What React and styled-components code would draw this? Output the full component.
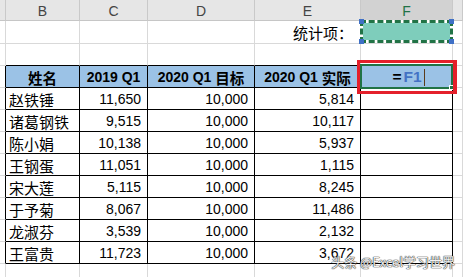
import React from "react";
import styled, { createGlobalStyle } from "styled-components";

const Global = createGlobalStyle`
  html, body { margin: 0; padding: 0; background: #fff; overflow: hidden; }
  * { box-sizing: border-box; }
`;

const GRID = "#d9d9d9";
const INK = "#000";

const Sheet = styled.div`
  position: relative;
  display: grid;
  grid-template-columns: 6px 74px 68px 107px 106px 92px 1fr;
  grid-template-rows: 21px 23px 22px repeat(9, 22px) 22px;
  width: 463px;
  height: 277px;
  overflow: hidden;
  background: #fff;
`;

const ColHead = styled.div`
  display: flex;
  align-items: center;
  justify-content: center;
  background: ${(p) => (p.$active ? "#d2d2d2" : "#e6e6e6")};
  border-right: 1px solid #c9c9c9;
  border-bottom: 1px solid ${(p) => (p.$active ? "#217346" : "#c6c6c6")};
  color: ${(p) => (p.$active ? "#217346" : "#444")};
  font-family: "Liberation Sans", Arial, sans-serif;
  font-size: 14px;
  padding-top: 1px;
`;

const Cell = styled.div`
  position: relative;
  display: flex;
  align-items: center;
  justify-content: ${(p) =>
    p.$align === "right" ? "flex-end" : p.$align === "center" ? "center" : "flex-start"};
  padding: ${(p) => (p.$align === "right" ? "1px 6px 0 0" : p.$align === "center" ? "1px 0 0" : "1px 0 0 3px")};
  background: ${(p) => p.$bg || "#fff"};
  border-right: 1px solid ${(p) => p.$r || GRID};
  border-bottom: 1px solid ${(p) => p.$b || GRID};
  color: #000;
  font-family: "Liberation Sans", Arial, "Noto Sans CJK SC", sans-serif;
  font-size: ${(p) => p.$size || 14}px;
  font-weight: ${(p) => (p.$bold ? 700 : 400)};
  white-space: nowrap;
`;

const Name = styled.span`
  font-family: "Noto Sans CJK SC", sans-serif;
  font-size: 15px;
`;

const CjkBold = styled.span`
  font-family: "Noto Sans CJK SC", sans-serif;
  font-size: 14.5px;
  font-weight: 700;
`;

const Label = styled.span`
  font-family: "Noto Sans CJK SC", sans-serif;
  font-size: 15px;
  margin-right: 1px;
`;

const Marquee = styled.div`
  position: absolute;
  z-index: 3;
  left: -1px;
  top: -1px;
  width: 93px;
  height: 23px;
  border: 3px dashed #217346;
  background: linear-gradient(#7ecdbb, #7ecdbb) padding-box,
    linear-gradient(#fff, #fff) border-box;
`;

const Handle = styled.span`
  position: absolute;
  width: 5px;
  height: 5px;
  background: #3f70c6;
  ${(p) => (p.$top ? "top: -4px;" : "bottom: -4px;")}
  ${(p) => (p.$left ? "left: -4px;" : "right: -4px;")}
`;

const Selection = styled.div`
  position: absolute;
  z-index: 3;
  left: -1px;
  top: -2px;
  width: 93px;
  height: 25px;
  border: 2px solid #217346;
  pointer-events: none;
`;

const FillHandle = styled.span`
  position: absolute;
  right: -3px;
  bottom: -3px;
  width: 5px;
  height: 5px;
  background: #217346;
  border: 1px solid #fff;
`;

const RedBox = styled.div`
  position: absolute;
  z-index: 4;
  left: -4px;
  top: -6px;
  width: 100px;
  height: 34px;
  border: 3px solid #e4202b;
  border-right-width: 4px;
  pointer-events: none;
`;

const Formula = styled.span`
  position: relative;
  display: inline-flex;
  align-items: center;
  font-family: "Liberation Sans", Arial, sans-serif;
  font-size: 15.5px;
  font-weight: 700;
  color: #000;
  margin-left: 4px;
`;

const Ref = styled.span`
  color: #4472c4;
  margin-left: 2px;
`;

const Caret = styled.span`
  display: inline-block;
  width: 1px;
  height: 17px;
  background: #5b3b1c;
  margin-left: 2px;
`;

const Watermark = styled.div`
  position: absolute;
  z-index: 5;
  right: 8px;
  bottom: 8px;
  font-family: "Noto Sans CJK SC", sans-serif;
  font-size: 13px;
  line-height: 14px;
  color: rgba(255, 255, 255, 0.95);
  text-shadow: 0 0 1px #333, 0 0 1px #333, 0 0 1px #555;
  white-space: nowrap;
  pointer-events: none;
`;

const rows = [
  ["赵铁锤", "11,650", "10,000", "5,814"],
  ["诸葛钢铁", "9,515", "10,000", "10,117"],
  ["陈小娟", "10,138", "10,000", "5,937"],
  ["王钢蛋", "11,051", "10,000", "1,115"],
  ["宋大莲", "5,115", "10,000", "8,245"],
  ["于予菊", "8,067", "10,000", "11,486"],
  ["龙淑芬", "3,539", "10,000", "2,132"],
  ["王富贵", "11,723", "10,000", "3,672"],
];

const letters = ["", "B", "C", "D", "E", "F", ""];

export default function App() {
  return (
    <>
      <Global />
      <Sheet>
        {letters.map((l, i) => (
          <ColHead key={"h" + i} $active={l === "F"}>
            {l}
          </ColHead>
        ))}

        {/* row 1 */}
        <Cell />
        <Cell />
        <Cell />
        <Cell />
        <Cell $align="right">
          <Label>统计项：</Label>
        </Cell>
        <Cell>
          <Marquee>
            <Handle $top $left />
            <Handle $top />
            <Handle $left />
            <Handle />
          </Marquee>
        </Cell>
        <Cell />

        {/* row 2 */}
        <Cell />
        <Cell $b={INK} />
        <Cell $b={INK} />
        <Cell $b={INK} />
        <Cell $b={INK} />
        <Cell $b={INK} />
        <Cell />

        {/* header row */}
        <Cell $r={INK} />
        <Cell $r={INK} $b={INK} $bg="#9bc2e6" $align="center" $bold>
          <CjkBold>姓名</CjkBold>
        </Cell>
        <Cell $r={INK} $b={INK} $bg="#9bc2e6" $align="center" $bold>
          2019 Q1
        </Cell>
        <Cell $r={INK} $b={INK} $bg="#9bc2e6" $align="center" $bold>
          2020 Q1&nbsp;<CjkBold>目标</CjkBold>
        </Cell>
        <Cell $r={INK} $b={INK} $bg="#9bc2e6" $align="center" $bold>
          2020 Q1&nbsp;<CjkBold>实际</CjkBold>
        </Cell>
        <Cell $r={INK} $b={INK} $bg="#9bc2e6" $align="center" $bold>
          <Formula>
            =<Ref>F1</Ref>
            <Caret />
          </Formula>
          <Selection>
            <FillHandle />
          </Selection>
          <RedBox />
        </Cell>
        <Cell />

        {rows.map((r, i) => (
          <React.Fragment key={i}>
            <Cell $r={INK} />
            <Cell $r={INK} $b={INK}>
              <Name>{r[0]}</Name>
            </Cell>
            <Cell $r={INK} $b={INK} $align="right">
              {r[1]}
            </Cell>
            <Cell $r={INK} $b={INK} $align="right">
              {r[2]}
            </Cell>
            <Cell $r={INK} $b={INK} $align="right">
              {r[3]}
            </Cell>
            <Cell $r={INK} $b={INK} />
            <Cell />
          </React.Fragment>
        ))}

        {/* trailing row */}
        <Cell />
        <Cell />
        <Cell />
        <Cell />
        <Cell />
        <Cell />
        <Cell />

        <Watermark>头条 @Excel学习世界</Watermark>
      </Sheet>
    </>
  );
}
